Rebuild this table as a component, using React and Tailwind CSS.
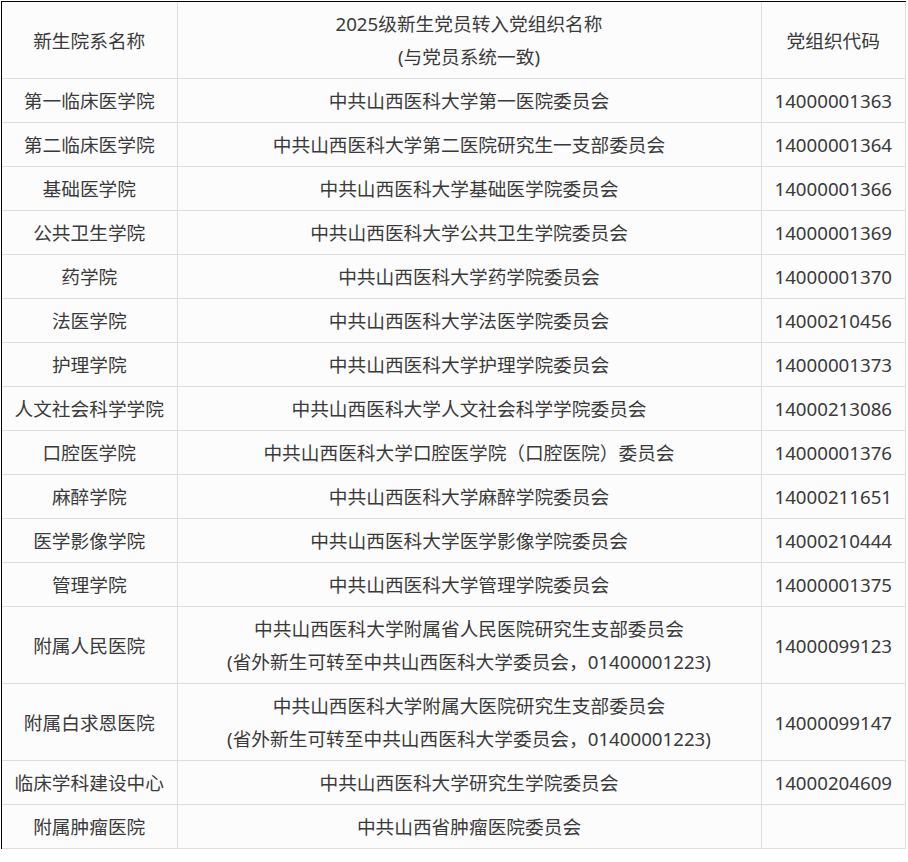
const rows = [
  ["第一临床医学院", ["中共山西医科大学第一医院委员会"], "14000001363"],
  ["第二临床医学院", ["中共山西医科大学第二医院研究生一支部委员会"], "14000001364"],
  ["基础医学院", ["中共山西医科大学基础医学院委员会"], "14000001366"],
  ["公共卫生学院", ["中共山西医科大学公共卫生学院委员会"], "14000001369"],
  ["药学院", ["中共山西医科大学药学院委员会"], "14000001370"],
  ["法医学院", ["中共山西医科大学法医学院委员会"], "14000210456"],
  ["护理学院", ["中共山西医科大学护理学院委员会"], "14000001373"],
  ["人文社会科学学院", ["中共山西医科大学人文社会科学学院委员会"], "14000213086"],
  ["口腔医学院", ["中共山西医科大学口腔医学院（口腔医院）委员会"], "14000001376"],
  ["麻醉学院", ["中共山西医科大学麻醉学院委员会"], "14000211651"],
  ["医学影像学院", ["中共山西医科大学医学影像学院委员会"], "14000210444"],
  ["管理学院", ["中共山西医科大学管理学院委员会"], "14000001375"],
  [
    "附属人民医院",
    ["中共山西医科大学附属省人民医院研究生支部委员会", "(省外新生可转至中共山西医科大学委员会，01400001223)"],
    "14000099123",
  ],
  [
    "附属白求恩医院",
    ["中共山西医科大学附属大医院研究生支部委员会", "(省外新生可转至中共山西医科大学委员会，01400001223)"],
    "14000099147",
  ],
  ["临床学科建设中心", ["中共山西医科大学研究生学院委员会"], "14000204609"],
  ["附属肿瘤医院", ["中共山西省肿瘤医院委员会"], ""],
];

const cell = "border border-[#dddddd] px-1 py-[5px] text-center align-middle";

export default function App() {
  return (
    <div
      className="min-h-screen bg-white pl-px pt-px text-[18.7px] leading-[33px] text-[#3a3a3a]"
      style={{ fontFamily: '"Noto Sans", "Noto Sans CJK SC", sans-serif' }}
    >
      <div className="w-[905px] border-l border-t border-black">
        <table className="w-full table-fixed border-collapse bg-[#fcfcfc]">
          <colgroup>
            <col className="w-[175px]" />
            <col className="w-[584px]" />
            <col />
          </colgroup>
          <thead>
            <tr>
              <th className={`${cell} border-t-0 border-l-0 font-normal`}>新生院系名称</th>
              <th className={`${cell} border-t-0 font-normal`}>
                <div>2025级新生党员转入党组织名称</div>
                <div>(与党员系统一致)</div>
              </th>
              <th className={`${cell} border-t-0 font-normal`}>党组织代码</th>
            </tr>
          </thead>
          <tbody>
            {rows.map(([dept, org, code]) => (
              <tr key={dept}>
                <td className={`${cell} border-l-0 whitespace-nowrap`}>{dept}</td>
                <td className={cell}>
                  {org.map((line) => (
                    <div key={line} className="whitespace-nowrap">{line}</div>
                  ))}
                </td>
                <td className={cell}>{code}</td>
              </tr>
            ))}
          </tbody>
        </table>
      </div>
    </div>
  );
}
